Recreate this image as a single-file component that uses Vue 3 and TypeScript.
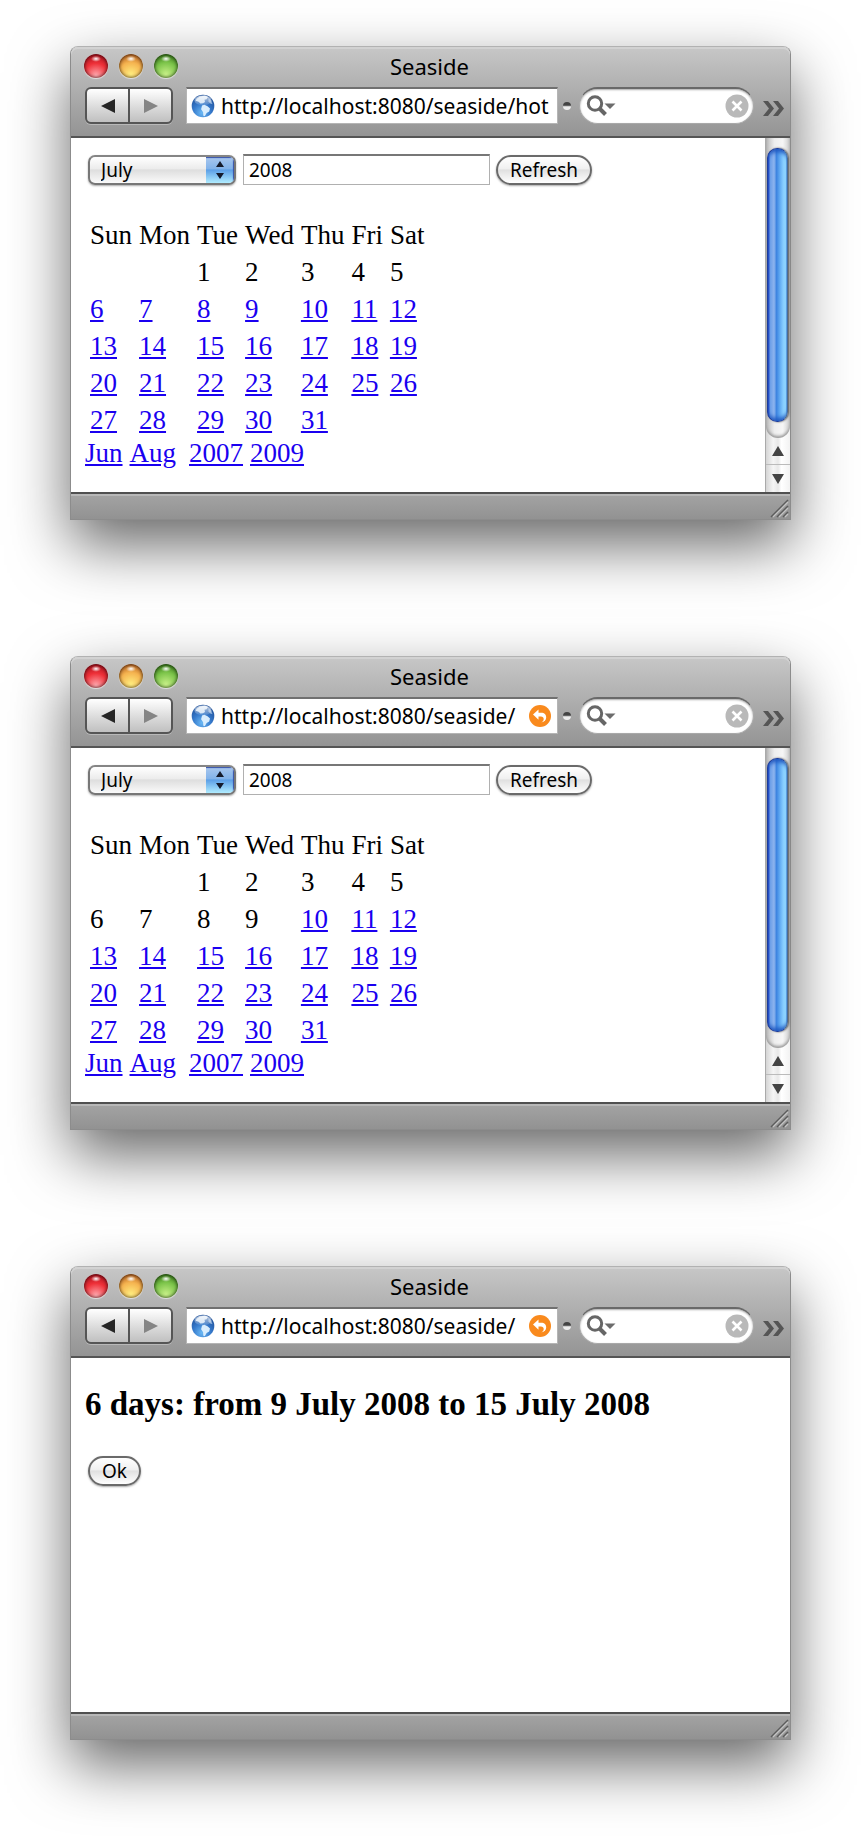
<script setup lang="ts">
import { ref } from 'vue'

interface Cell {
  day: number | null
  link: boolean
}

interface BrowserWindow {
  id: string
  url: string
  snapBack: boolean
  kind: 'calendar' | 'report'
  firstLink: number
}

const weekdays = ['Sun', 'Mon', 'Tue', 'Wed', 'Thu', 'Fri', 'Sat']
const months = ['June', 'July', 'August']

const windows = ref<BrowserWindow[]>([
  { id: 'start', url: 'http://localhost:8080/seaside/hot', snapBack: false, kind: 'calendar', firstLink: 6 },
  { id: 'end', url: 'http://localhost:8080/seaside/', snapBack: true, kind: 'calendar', firstLink: 10 },
  { id: 'report', url: 'http://localhost:8080/seaside/', snapBack: true, kind: 'report', firstLink: 0 },
])

// July 2008 starts on a Tuesday and has 31 days.
function weeks(firstLink: number): Cell[][] {
  const rows: Cell[][] = []
  for (let w = 0; w < 5; w++) {
    const row: Cell[] = []
    for (let d = 0; d < 7; d++) {
      const day = w * 7 + d - 1
      const valid = day >= 1 && day <= 31
      row.push({ day: valid ? day : null, link: valid && day >= firstLink })
    }
    rows.push(row)
  }
  return rows
}
</script>

<template>
  <main class="desktop">
    <section v-for="w in windows" :key="w.id" class="window">
      <header class="chrome">
        <div class="titlebar">
          <div class="lights">
            <button class="light red" type="button" aria-label="Close"></button>
            <button class="light amber" type="button" aria-label="Minimize"></button>
            <button class="light green" type="button" aria-label="Zoom"></button>
          </div>
          <h1 class="title">Seaside</h1>
        </div>
        <div class="toolbar">
          <div class="nav">
            <button type="button" aria-label="Back">
              <svg width="14" height="14" viewBox="0 0 14 14"><path d="M0 7 14 0v14z" fill="#262626" /></svg>
            </button>
            <button type="button" aria-label="Forward">
              <svg width="14" height="14" viewBox="0 0 14 14"><path d="M14 7 0 0v14z" fill="#858585" /></svg>
            </button>
          </div>
          <div class="address">
            <svg class="globe" width="24" height="24" viewBox="0 0 24 24" aria-hidden="true">
              <defs>
                <radialGradient :id="'sea-' + w.id" cx="45%" cy="80%" r="80%">
                  <stop offset="0" stop-color="#6ab8f4" />
                  <stop offset=".5" stop-color="#3579cb" />
                  <stop offset="1" stop-color="#1d4c94" />
                </radialGradient>
                <linearGradient :id="'shine-' + w.id" x1="0" y1="0" x2="0" y2="1">
                  <stop offset="0" stop-color="#fff" stop-opacity=".75" />
                  <stop offset="1" stop-color="#fff" stop-opacity=".08" />
                </linearGradient>
              </defs>
              <circle cx="12" cy="12" r="11.300" :fill="'url(#sea-' + w.id + ')'" />
              <path d="M9 2.500l5-1 3 1.500-1.500 2.300-2 .4.500 2.300-2 1.300-2.600.2-1.800-1.800-3-1 1-2z" fill="#e7f3fd" opacity=".85" />
              <path d="M11 11.500l2.500-.8 3 1.500 2.500 2.200-.8 3-2.600 1.500-1.800 3.300-1.500-.5-.2-3.500-2-3z" fill="#dff1ff" opacity=".95" />
              <path d="M17.500 4l3 3 1 3.200-2-.4-2-2.300z" fill="#c8e0f7" opacity=".6" />
              <ellipse cx="12" cy="6.500" rx="8.500" ry="5" :fill="'url(#shine-' + w.id + ')'" />
            </svg>
            <input v-model="w.url" type="text" aria-label="Address" />
            <button v-if="w.snapBack" class="snap" type="button" aria-label="SnapBack">
              <svg width="22" height="22" viewBox="0 0 22 22">
                <circle cx="11" cy="11" r="11" fill="#f98a1d" />
                <path d="M4 9.500 9.500 4.500v3.300h2.500c3.600 0 5.200 2 5.200 4.600 0 2.500-1.800 4.500-4.900 5 1.700-1 2.400-2.100 2.400-3.500 0-1.600-1-2.500-2.800-2.500H9.500v3.300z" fill="#fff" />
              </svg>
            </button>
          </div>
          <span class="grip"></span>
          <div class="search">
            <svg width="30" height="22" viewBox="0 0 30 22" aria-hidden="true">
              <circle cx="9" cy="8.500" r="6.700" fill="none" stroke="#666" stroke-width="3" />
              <path d="M13.500 13.500l6 6" stroke="#666" stroke-width="4" />
              <path d="M18.500 8.500h11l-5.500 5.500z" fill="#6c6c6c" />
            </svg>
            <input type="text" aria-label="Search" />
            <button type="button" aria-label="Clear search">
              <svg width="24" height="24" viewBox="0 0 24 24">
                <circle cx="12" cy="12" r="11.500" fill="#b9b9b9" />
                <path d="M7.500 7.500l9 9M16.500 7.500l-9 9" stroke="#fff" stroke-width="2.600" />
              </svg>
            </button>
          </div>
          <button class="more" type="button" aria-label="More tools">
            <svg width="22" height="18" viewBox="0 0 22 18">
              <path d="M0 1h5l6 7.500-6 7.500H0l6-7.500zM10 1h5l6 7.500-6 7.500h-5l6-7.500z" fill="#555" />
            </svg>
          </button>
        </div>
      </header>

      <div class="viewport">
        <article v-if="w.kind === 'calendar'" class="page">
          <form class="controls" @submit.prevent>
            <div class="popup">
              <select aria-label="Month">
                <option v-for="m in months" :key="m" :selected="m === 'July'">{{ m }}</option>
              </select>
              <span class="stepper">
                <svg width="10" height="20" viewBox="0 0 10 20"><path d="M1 7 5 1l4 6zM1 13h8l-4 6z" fill="#151b2c" /></svg>
              </span>
            </div>
            <input class="year" type="text" value="2008" aria-label="Year" />
            <button class="push" type="submit">Refresh</button>
          </form>
          <table class="calendar">
            <thead>
              <tr>
                <th v-for="d in weekdays" :key="d" scope="col">{{ d }}</th>
              </tr>
            </thead>
            <tbody>
              <tr v-for="(row, r) in weeks(w.firstLink)" :key="r">
                <td v-for="(cell, c) in row" :key="c">
                  <a v-if="cell.link" href="#">{{ cell.day }}</a>
                  <template v-else>{{ cell.day }}</template>
                </td>
              </tr>
            </tbody>
          </table>
          <nav class="jumps">
            <span class="pair"><a href="#">Jun</a><a href="#">Aug</a></span>
            <span class="pair"><a href="#">2007</a><a href="#">2009</a></span>
          </nav>
        </article>

        <article v-else class="page">
          <h2 class="result">6 days: from 9 July 2008 to 15 July 2008</h2>
          <button class="push ok" type="button">Ok</button>
        </article>

        <div v-if="w.kind === 'calendar'" class="scrollbar">
          <div class="track"><div class="thumb"></div></div>
          <button type="button" aria-label="Scroll up">
            <svg width="12" height="10" viewBox="0 0 12 10"><path d="M6 0l6 10H0z" fill="#444" /></svg>
          </button>
          <button type="button" aria-label="Scroll down">
            <svg width="12" height="10" viewBox="0 0 12 10"><path d="M6 10 0 0h12z" fill="#444" /></svg>
          </button>
        </div>
      </div>

      <footer class="status">
        <svg width="20" height="20" viewBox="0 0 20 20" aria-hidden="true">
          <path d="M2 19 19 2M8 19 19 8M14 19l5-5" stroke="#5c5c5c" stroke-width="1.500" />
          <path d="M4 19 19 4M10 19l9-9M16 19l3-3" stroke="#c4c4c4" stroke-width="1.200" />
        </svg>
      </footer>
    </section>
  </main>
</template>

<style>
body {
  margin: 0;
  background: #fff;
}
</style>

<style scoped>
* {
  box-sizing: border-box;
}

.desktop {
  display: flex;
  flex-direction: column;
  gap: 136px;
  padding: 46px 70px 96px;
  overflow: hidden;
  font-family: "Noto Sans", "Open Sans", sans-serif;
  color: #000;
}

button {
  margin: 0;
  padding: 0;
  border: 0;
  background: none;
  font: inherit;
  color: inherit;
}

input {
  min-width: 0;
  margin: 0;
  padding: 0;
  border: 0;
  outline: 0;
  background: none;
  font: inherit;
  color: inherit;
}

svg {
  display: block;
  flex: none;
}

.window {
  border: 1px solid #8c8c8c;
  border-top-color: #b2b2b2;
  border-radius: 8px 8px 0 0;
  background: #fff;
  box-shadow: 0 25px 60px rgba(0, 0, 0, 0.6);
}

.chrome {
  padding-bottom: 12px;
  border-bottom: 2px solid #555;
  border-radius: 7px 7px 0 0;
  background: linear-gradient(#c7c7c7, #949494);
  box-shadow: inset 0 2px 0 #d2d2d2;
}

.titlebar {
  display: grid;
  grid-template-columns: 1fr auto 1fr;
  align-items: center;
  height: 40px;
  padding: 0 15px 2px 13px;
}

.lights {
  display: flex;
  gap: 11px;
}

.light {
  width: 24px;
  height: 24px;
  border-radius: 50%;
  box-shadow: inset 0 0 3px 1px rgba(0, 0, 0, 0.5), 0 1px 1px rgba(255, 255, 255, 0.6);
}

.red {
  background: radial-gradient(ellipse 5px 3px at 50% 20%, #fff, transparent),
    radial-gradient(circle at 50% 90%, #ffaab0 0, #ee3038 50%, #a30f1c 90%);
}

.amber {
  background: radial-gradient(ellipse 5px 3px at 50% 20%, #fff, transparent),
    radial-gradient(circle at 50% 85%, #ffee80 0, #f5b450 50%, #a84f17 95%);
}

.green {
  background: radial-gradient(ellipse 5px 3px at 50% 20%, #fff, transparent),
    radial-gradient(circle at 50% 85%, #c8f088 0, #7cc44a 50%, #28660f 95%);
}

.title {
  margin: 0;
  font-size: 22px;
  line-height: 30px;
  font-weight: 400;
}

.toolbar {
  display: flex;
  align-items: center;
  padding: 0 5px 0 14px;
}

.nav {
  display: flex;
  width: 88px;
  height: 37px;
  margin-right: 13px;
  border: 2px solid #555;
  border-radius: 6px;
  background: linear-gradient(#fff, #d8d8d8 60%, #c0c0c0);
  box-shadow: 0 1px 0 #b8b8b8;
}

.nav button {
  display: grid;
  flex: 1;
  place-items: center;
}

.nav button + button {
  border-left: 2px solid #555;
}

.address {
  display: flex;
  flex: 1;
  align-items: center;
  min-width: 0;
  height: 37px;
  padding: 0 3px 0 4px;
  border: 1px solid #b5b5b5;
  border-top: 2px solid #707070;
  background: #fff;
  font-size: 21px;
}

.address input {
  flex: 1;
  height: 32px;
  margin-left: 6px;
}

.snap {
  margin: 0 3px;
}

.grip {
  width: 8px;
  height: 8px;
  margin: 0 8px 0 5px;
  border-radius: 50%;
  background: linear-gradient(#444 40%, #eee 60%);
}

.search {
  display: flex;
  align-items: center;
  width: 175px;
  height: 37px;
  padding: 0 4px 0 6px;
  border: 1px solid #a9a9a9;
  border-top: 2px solid #696969;
  border-radius: 19px;
  background: #fff;
  box-shadow: inset 0 1px 2px #aaa;
}

.search input {
  flex: 1;
}

.more {
  margin: 6px 0 0 9px;
}

.viewport {
  display: flex;
  min-height: 354px;
}

.page {
  flex: 1;
  min-width: 0;
  padding: 16px 13px 0 14px;
  font-family: "Liberation Serif", serif;
  font-size: 27px;
  line-height: 30px;
}

.controls {
  display: flex;
  padding-left: 3px;
  font-family: "Noto Sans", "Open Sans", sans-serif;
  font-size: 19px;
}

.popup {
  display: flex;
  width: 148px;
  height: 30px;
  margin: 1px 7px 0 0;
  overflow: hidden;
  border: 2px solid #777;
  border-top-color: #858585;
  border-radius: 7px;
  background: linear-gradient(#fff, #ececec 45%, #dedede 50%, #fafafa);
  box-shadow: 0 1px 2px #aaa;
}

.popup select {
  flex: 1;
  min-width: 0;
  padding: 0 0 0 11px;
  appearance: none;
  border: 0;
  outline: 0;
  background: none;
  color: inherit;
  font-family: inherit;
  font-size: 19px;
  line-height: 26px;
}

.stepper {
  display: grid;
  place-items: center;
  width: 28px;
  box-shadow: inset -1px 1px 1px #3650a8;
  background: linear-gradient(#a9c7ee, #82b3ea 45%, #5c9fe6 50%, #b0ecff);
  pointer-events: none;
}

.year {
  width: 247px;
  height: 31px;
  margin-right: 6px;
  padding-left: 5px;
  border: 1px solid #b0b0b0;
  border-top: 2px solid #777;
  background: #fff;
}

.push {
  height: 30px;
  margin-top: 1px;
  padding: 0 12px;
  border: 2px solid #6a6a6a;
  border-radius: 15px;
  background: linear-gradient(#fff, #f0f0f0 45%, #e0e0e0 50%, #fff);
  box-shadow: 0 1px 2px #aaa;
  font-family: "Noto Sans", "Open Sans", sans-serif;
  font-size: 19px;
  line-height: 24px;
}

.calendar {
  margin-top: 30px;
  border-collapse: separate;
  border-spacing: 3px;
}

.calendar th,
.calendar td {
  height: 34px;
  padding: 2px;
  font-weight: 400;
  text-align: left;
}

a {
  color: #1a00f0;
  text-decoration: underline;
}

.jumps {
  display: flex;
  gap: 13px;
  line-height: 26px;
}

.pair {
  display: flex;
  gap: 7px;
}

.result {
  margin: 11px 0 33px;
  font-size: 33px;
  line-height: 38px;
  font-weight: 700;
}

.ok {
  display: block;
  margin-left: 3px;
}

.scrollbar {
  display: flex;
  flex-direction: column;
  width: 25px;
  border-left: 1px solid #aaa;
  background: linear-gradient(90deg, #d5d5d5, #f5f5f5 30%, #e8e8e8 50%, #fff 65%, #f2f2f2);
}

.track {
  flex: 1;
  padding: 10px 2px 16px 1px;
  border-radius: 0 0 12px 12px;
  background: linear-gradient(90deg, #bbb, #eee 35%, #f6f6f6 70%, #ccc);
  box-shadow: inset 0 -2px 3px #999;
}

.thumb {
  height: 100%;
  border: 1px solid #1d3d9c;
  border-right-color: #4a6a94;
  border-radius: 10px;
  background: linear-gradient(90deg, #1238bd, #6c9fe8 12%, #8db4ee 32%, #3d84e0 45%, #5ba5f0 60%, #86cdff 80%, #8fd6ff 92%, #4f90d8);
  box-shadow: inset 0 6px 4px -3px #2058c0, inset 0 -6px 4px -3px #2058c0, 1px 0 2px #555;
}

.scrollbar button {
  display: grid;
  place-items: center;
  height: 26px;
}

.scrollbar button + button {
  height: 28px;
  border-top: 1px solid #bbb;
}

.status {
  display: flex;
  justify-content: flex-end;
  align-items: flex-end;
  height: 27px;
  padding: 0 1px 1px;
  border-top: 2px solid #505050;
  background: linear-gradient(#b8b8b8 0, #b8b8b8 2px, #a2a2a2 2px, #929292);
}
</style>
